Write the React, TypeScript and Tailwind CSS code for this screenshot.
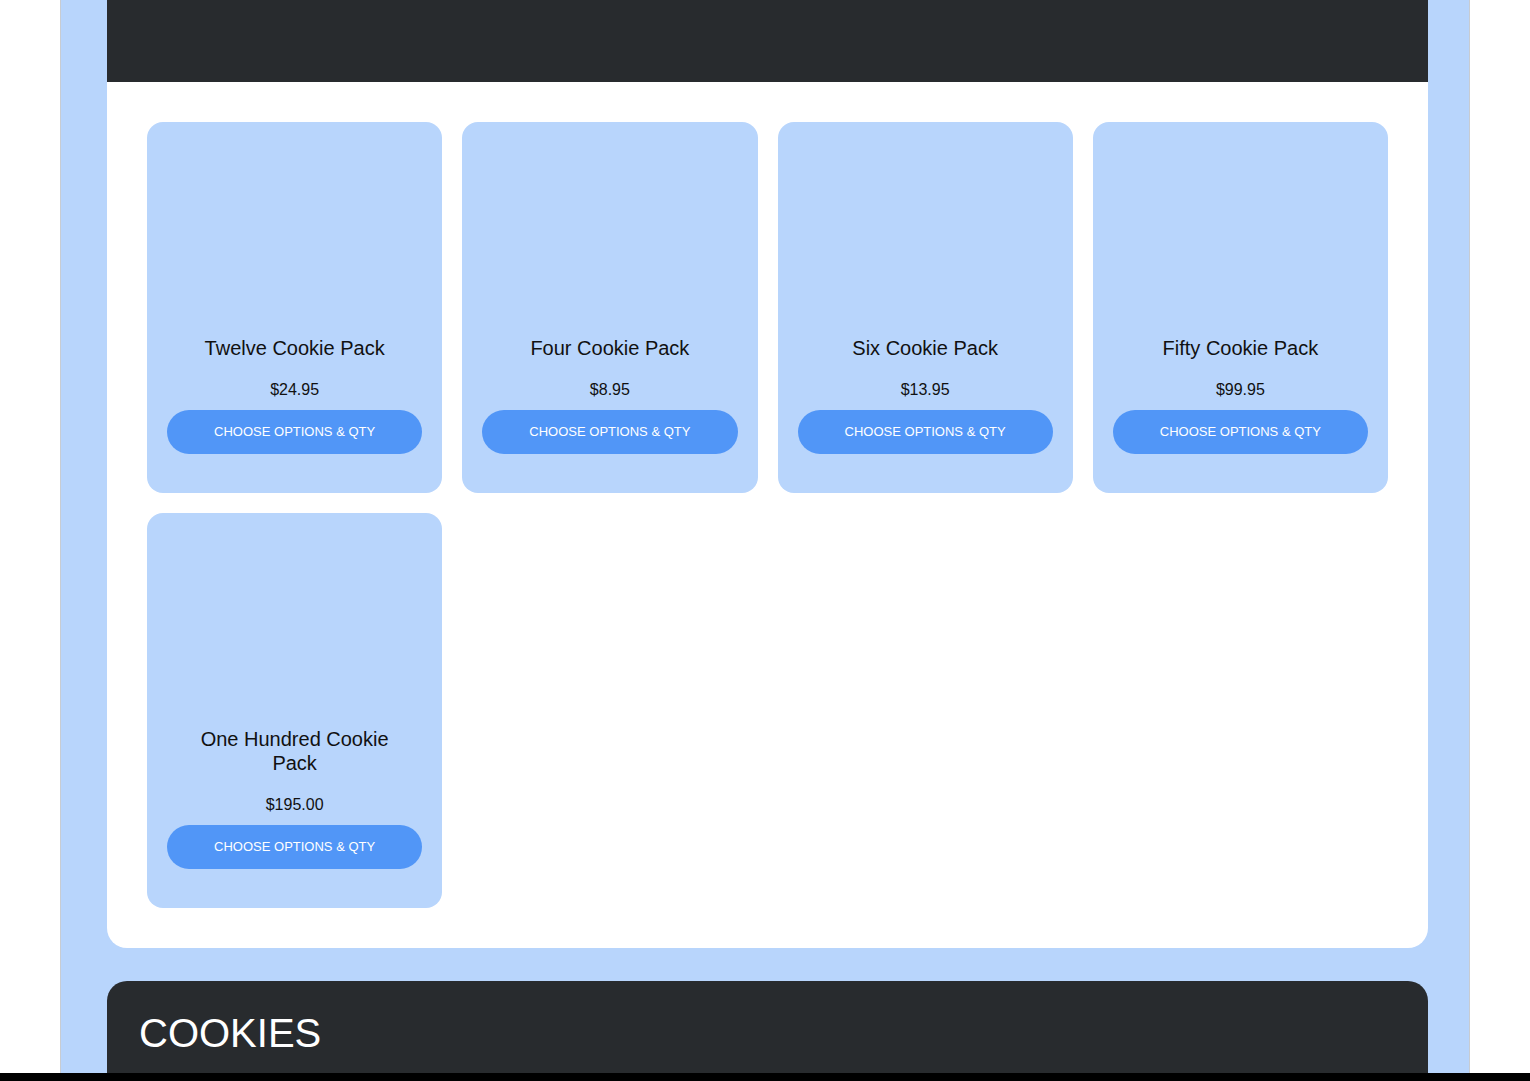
const products = [
  { name: "Twelve Cookie Pack", price: "$24.95" },
  { name: "Four Cookie Pack", price: "$8.95" },
  { name: "Six Cookie Pack", price: "$13.95" },
  { name: "Fifty Cookie Pack", price: "$99.95" },
  { name: "One Hundred Cookie Pack", price: "$195.00" },
];

const ProductCard = ({ name, price }: { name: string; price: string }) => (
  <article className="flex flex-col items-center rounded-2xl bg-[#b8d5fc] px-5 pt-5 pb-[39px] text-center">
    {/* image placeholder */}
    <div className="h-[195px] w-full" />
    <h3 className="px-8 text-[20px] leading-[23.5px] text-[#111]">{name}</h3>
    <p className="mt-[17.5px] text-[16px] leading-6 text-[#111]">{price}</p>
    <button
      type="button"
      className="mt-2 flex h-11 w-full items-center justify-center rounded-full bg-[#5196f7] text-[13px] uppercase text-white"
    >
      Choose Options &amp; Qty
    </button>
  </article>
);

export default function App() {
  return (
    <div className="min-h-screen bg-white px-[60px] font-['Liberation_Sans',Arial,sans-serif]">
      <div className="border-x border-[#c8ccd2] bg-[#b8d5fc] pl-[46px] pr-[41px]">
        <header className="h-[82px] bg-[#282b2e]" />
        <section className="rounded-b-[20px] bg-white p-10">
          <div className="grid grid-cols-4 gap-5">
            {products.map((p) => (
              <ProductCard key={p.name} name={p.name} price={p.price} />
            ))}
          </div>
        </section>
        <section className="mt-[33px] rounded-t-[20px] bg-[#282b2e] px-8 pt-[30px] pb-10">
          <h2 className="text-[40px] leading-[44px] text-white">COOKIES</h2>
        </section>
      </div>
      <div className="fixed inset-x-0 bottom-0 h-2 bg-black" />
    </div>
  );
}
